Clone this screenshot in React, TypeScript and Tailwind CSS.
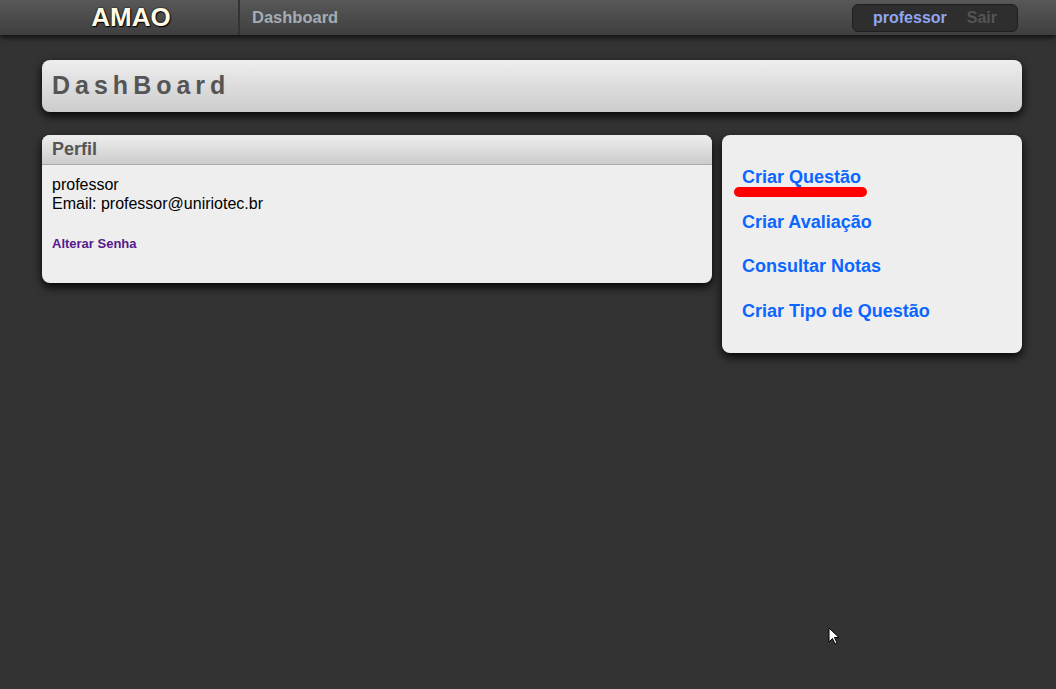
const links = ['Criar Questão', 'Criar Avaliação', 'Consultar Notas', 'Criar Tipo de Questão']

const App = () => {
  return (
    <div className="relative min-h-[689px] bg-[#333333] font-['Liberation_Sans',Arial,sans-serif]">
      <div className="flex h-[35px] items-stretch bg-gradient-to-b from-[#585858] to-[#3f3f3f] shadow-[0_2px_6px_rgba(0,0,0,0.8)]">
        <div className="flex w-[240px] items-center justify-center border-r-2 border-[#333] pl-[24px]">
          <span className="text-[26px] font-bold text-[#fffbe6] [text-shadow:0_0_2px_#000,1px_1px_1px_#000]">
            AMAO
          </span>
        </div>
        <div className="flex flex-1 items-center pl-[12px]">
          <span className="text-[16.5px] font-bold text-[#a3adb3]">Dashboard</span>
        </div>
        <div className="flex items-center pr-[38px]">
          <div className="flex h-[28px] w-[166px] items-center gap-[20px] rounded-[6px] border border-[#1f1f1f] bg-[#2e2e2e] pl-[20px]">
            <span className="text-[16px] font-bold text-[#8fa6f2]">professor</span>
            <span className="text-[16px] font-bold text-[#555]">Sair</span>
          </div>
        </div>
      </div>

      <div className="pl-[42px] pr-[34px] pt-[25px]">
        <div className="flex h-[52px] items-center rounded-[8px] bg-gradient-to-b from-[#eeeeee] to-[#cccccc] pl-[10px] shadow-[0_4px_10px_rgba(0,0,0,0.9)]">
          <span className="text-[25px] font-bold tracking-[5px] text-[#555]">DashBoard</span>
        </div>

        <div className="mt-[23px] flex items-start gap-[10px]">
          <div className="w-[670px] overflow-hidden rounded-[8px] bg-[#eeeeee] shadow-[0_4px_10px_rgba(0,0,0,0.9)]">
            <div className="flex h-[30px] items-center border-b border-[#aaaaaa] bg-gradient-to-b from-[#eeeeee] to-[#cccccc] pl-[10px]">
              <span className="text-[18px] font-bold text-[#555]">Perfil</span>
            </div>
            <div className="h-[118px] px-[10px] pt-[10px] text-[16px] leading-[19px] text-black">
              <div>professor</div>
              <div>Email: professor@uniriotec.br</div>
              <a className="mt-[21px] block text-[13px] font-bold text-[#551a8b]" href="#">
                Alterar Senha
              </a>
            </div>
          </div>

          <div className="relative flex h-[218px] w-[300px] flex-col gap-[23.5px] rounded-[8px] bg-[#eeeeee] pl-[20px] pt-[32px] shadow-[0_4px_10px_rgba(0,0,0,0.9)]">
            {links.map(l => (
              <a key={l} href="#" className="text-[18px] font-bold leading-[21px] text-[#0a66ff]">
                {l}
              </a>
            ))}
            <div className="absolute left-[12px] top-[52px] h-[10px] w-[133px] rounded-full bg-[#ff0000]" />
          </div>
        </div>
      </div>

      <svg className="absolute left-[828px] top-[627px]" width="12" height="19" viewBox="0 0 12 19">
        <path d="M1 1 L1 15 L4.5 11.5 L7 17 L9 16 L6.5 10.5 L11 10.5 Z" fill="#fff" stroke="#000" strokeWidth="1" />
      </svg>
    </div>
  )
}

export default App
